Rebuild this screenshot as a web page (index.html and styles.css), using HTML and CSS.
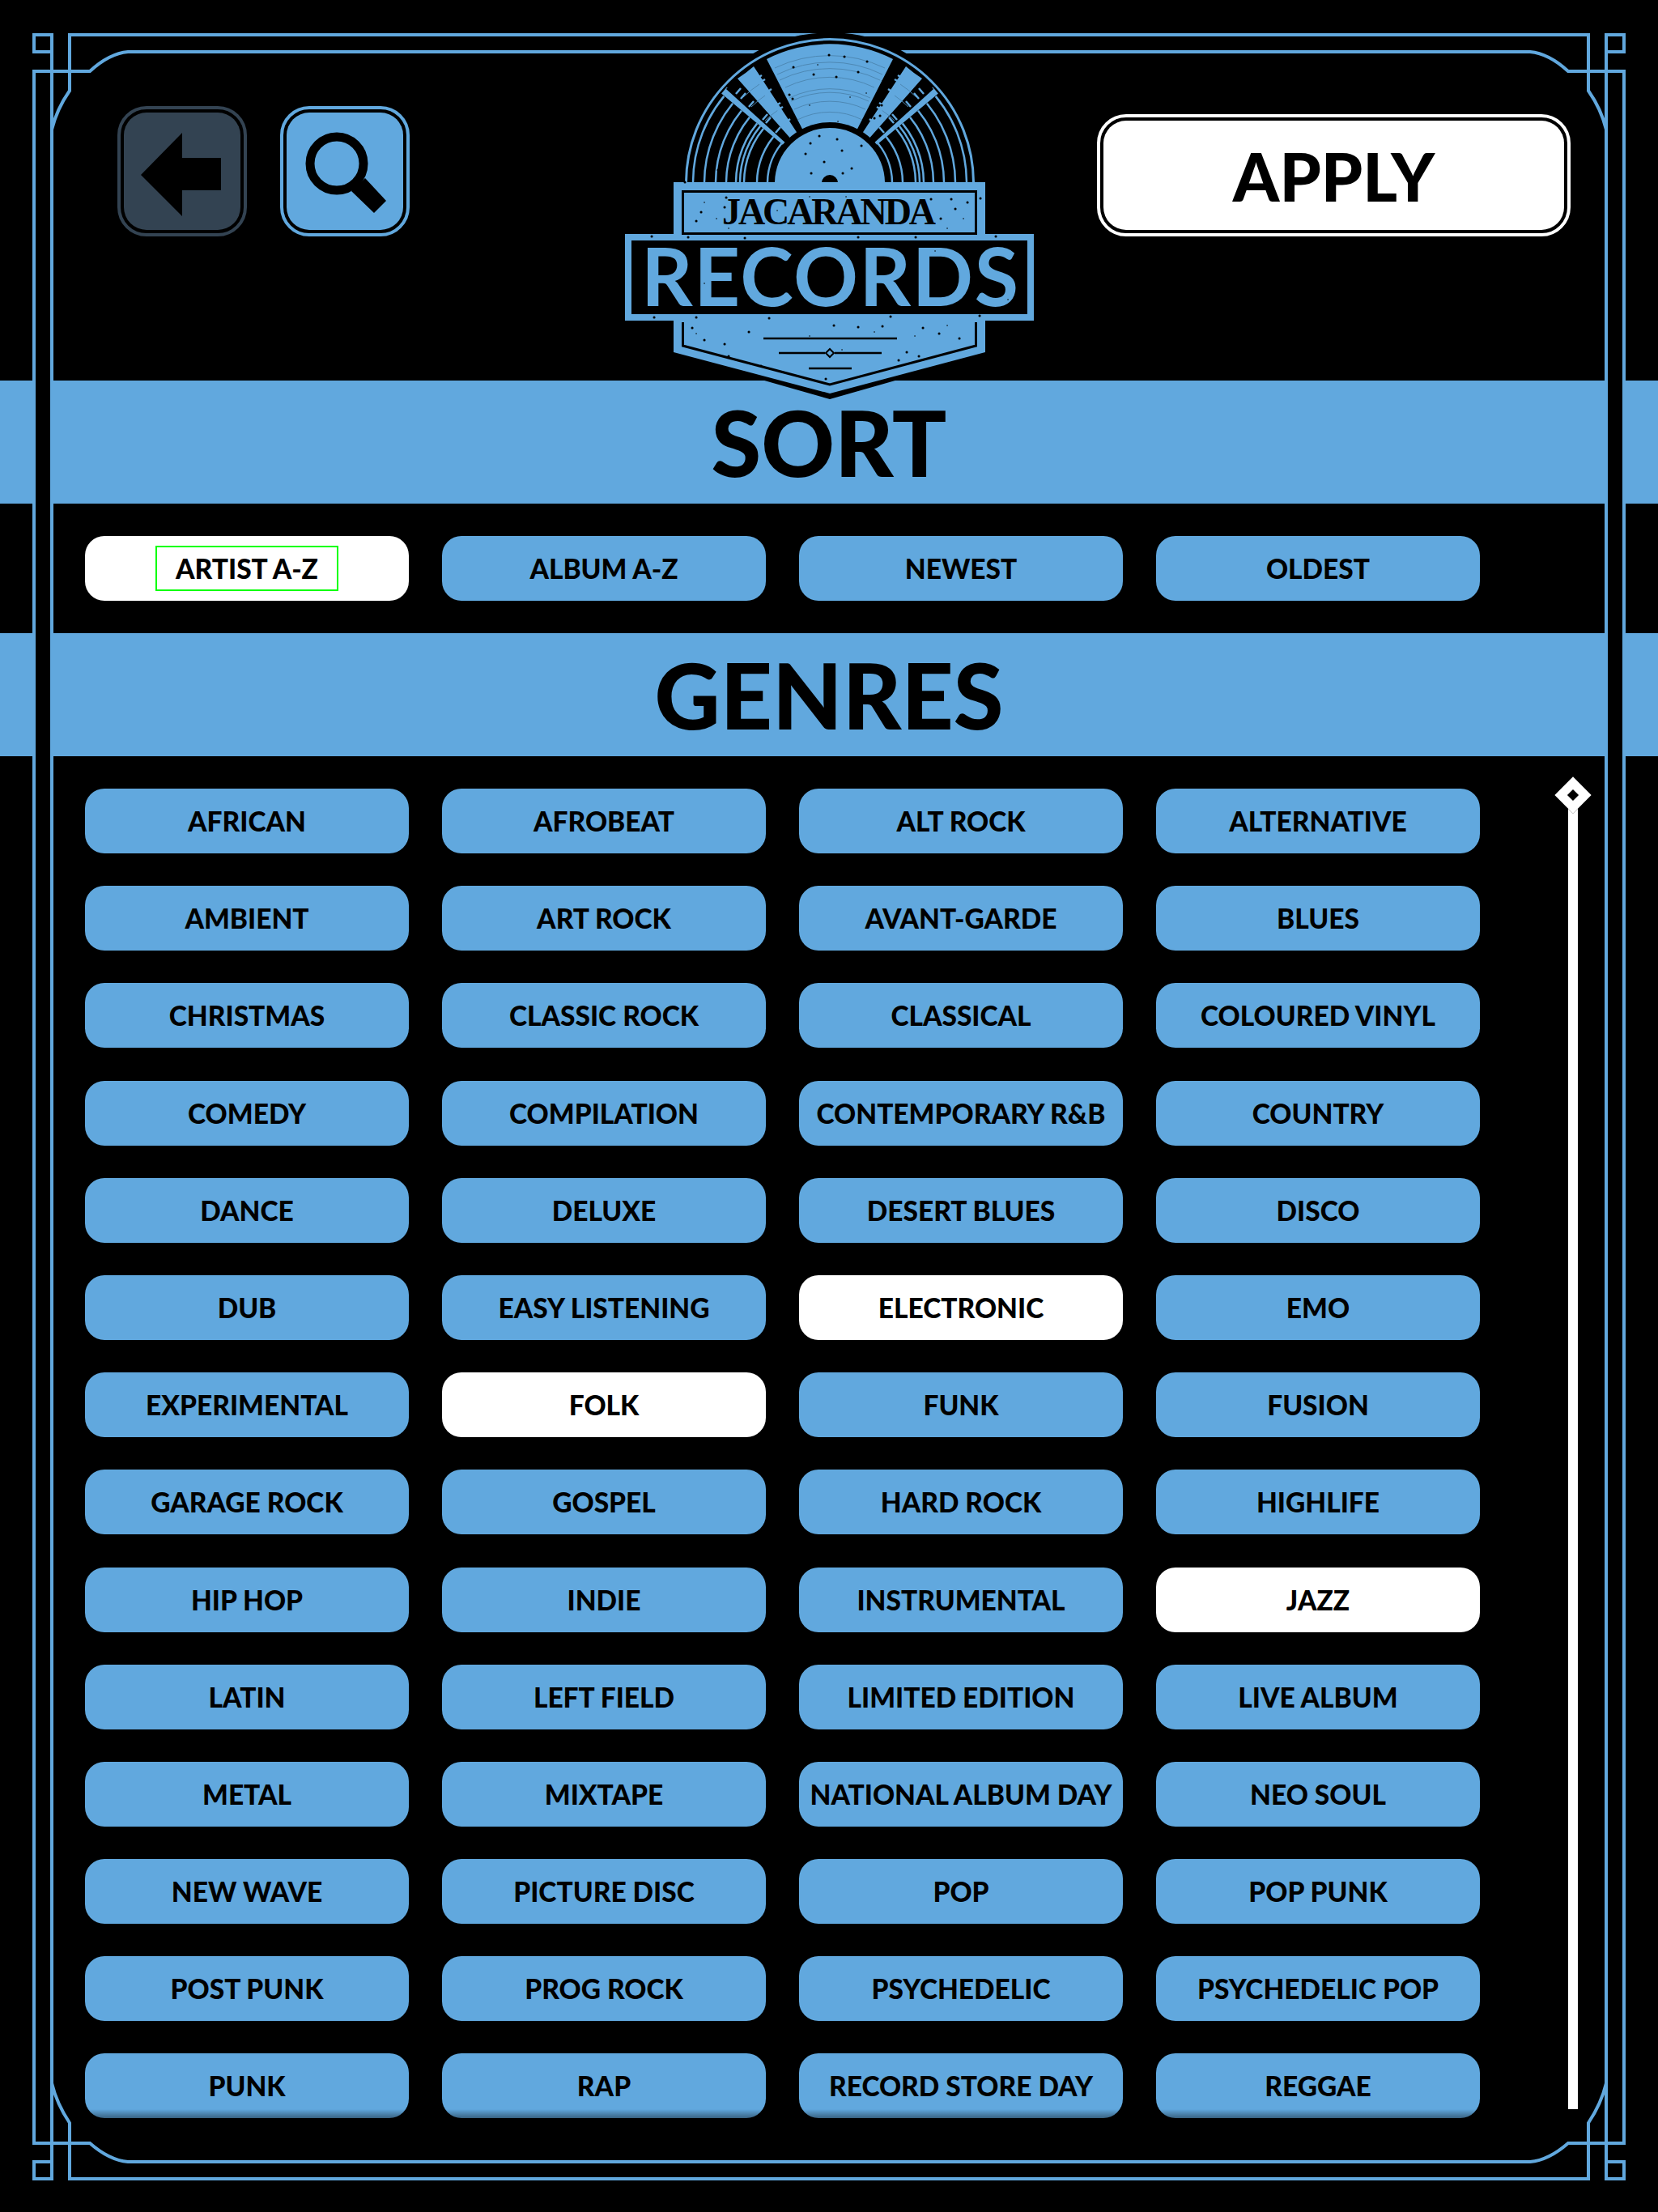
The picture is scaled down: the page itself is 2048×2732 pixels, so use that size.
FILE: index.html
```html
<!DOCTYPE html>
<html lang="en">
<head>
    <meta charset="UTF-8">
    <title>Jacaranda Records</title>
    <link rel="stylesheet" href="styles.css">
</head>
<body>
    <div class="page">
        <header class="topBar">
            <button class="iconButton backButton" aria-label="Back">
                <svg width="144" height="144" viewBox="153 139 144 144">
                    <path d="M174 216 225 164V195H273V235H225V267Z"></path>
                </svg>
            </button>
            <button class="iconButton searchButton" aria-label="Search">
                <svg width="144" height="144" viewBox="354 139 144 144">
                    <ellipse cx="416" cy="202" rx="33" ry="33" fill="none" stroke="#000" stroke-width="11"></ellipse>
                    <path d="M451 220 477 248 462 263 434 236Z"></path>
                </svg>
            </button>
            <button class="applyButton">APPLY</button>
        </header>

        <h2 class="sectionBar">SORT</h2>
        <div class="buttonGrid sortGrid">
            <button class="pill selected"><span class="focusBox">ARTIST A-Z</span></button>
            <button class="pill">ALBUM A-Z</button>
            <button class="pill">NEWEST</button>
            <button class="pill">OLDEST</button>
        </div>

        <h2 class="sectionBar">GENRES</h2>
        <div class="listArea">
            <div class="buttonGrid genreGrid">
                <button class="pill">AFRICAN</button>
                <button class="pill">AFROBEAT</button>
                <button class="pill">ALT ROCK</button>
                <button class="pill">ALTERNATIVE</button>
                <button class="pill">AMBIENT</button>
                <button class="pill">ART ROCK</button>
                <button class="pill">AVANT-GARDE</button>
                <button class="pill">BLUES</button>
                <button class="pill">CHRISTMAS</button>
                <button class="pill">CLASSIC ROCK</button>
                <button class="pill">CLASSICAL</button>
                <button class="pill">COLOURED VINYL</button>
                <button class="pill">COMEDY</button>
                <button class="pill">COMPILATION</button>
                <button class="pill">CONTEMPORARY R&amp;B</button>
                <button class="pill">COUNTRY</button>
                <button class="pill">DANCE</button>
                <button class="pill">DELUXE</button>
                <button class="pill">DESERT BLUES</button>
                <button class="pill">DISCO</button>
                <button class="pill">DUB</button>
                <button class="pill">EASY LISTENING</button>
                <button class="pill selected">ELECTRONIC</button>
                <button class="pill">EMO</button>
                <button class="pill">EXPERIMENTAL</button>
                <button class="pill selected">FOLK</button>
                <button class="pill">FUNK</button>
                <button class="pill">FUSION</button>
                <button class="pill">GARAGE ROCK</button>
                <button class="pill">GOSPEL</button>
                <button class="pill">HARD ROCK</button>
                <button class="pill">HIGHLIFE</button>
                <button class="pill">HIP HOP</button>
                <button class="pill">INDIE</button>
                <button class="pill">INSTRUMENTAL</button>
                <button class="pill selected">JAZZ</button>
                <button class="pill">LATIN</button>
                <button class="pill">LEFT FIELD</button>
                <button class="pill">LIMITED EDITION</button>
                <button class="pill">LIVE ALBUM</button>
                <button class="pill">METAL</button>
                <button class="pill">MIXTAPE</button>
                <button class="pill">NATIONAL ALBUM DAY</button>
                <button class="pill">NEO SOUL</button>
                <button class="pill">NEW WAVE</button>
                <button class="pill">PICTURE DISC</button>
                <button class="pill">POP</button>
                <button class="pill">POP PUNK</button>
                <button class="pill">POST PUNK</button>
                <button class="pill">PROG ROCK</button>
                <button class="pill">PSYCHEDELIC</button>
                <button class="pill">PSYCHEDELIC POP</button>
                <button class="pill">PUNK</button>
                <button class="pill">RAP</button>
                <button class="pill">RECORD STORE DAY</button>
                <button class="pill">REGGAE</button>
            </div>
            <div class="listFade"></div>
            <div class="scrollTrack"><div class="scrollThumb"></div></div>
        </div>

        <!-- art deco frame, drawn over the bars -->
        <svg class="frame" width="2048" height="2732" viewBox="0 0 2048 2732">
            <rect x="44" y="86" width="18" height="2561" fill="#000"></rect>
            <rect x="1986" y="86" width="18" height="2561" fill="#000"></rect>
            <g fill="none" stroke="#61a8de" stroke-width="4">
                <path d="M42 2647V88H111Q135 66 158 64H1890Q1913 66 1937 88H2006V2647H1937Q1913 2668 1890 2670H158Q135 2668 111 2647Z"></path>
                <path d="M64 64H42V43H64V2691H42V2670H64"></path>
                <path d="M64 160Q70 135 86 112V43H1962V112Q1978 135 1984 160"></path>
                <path d="M64 2573Q70 2598 86 2622V2691H1962V2622Q1978 2598 1984 2573"></path>
                <path d="M1984 64H2006V43H1984V2691H2006V2670H1984"></path>
            </g>
        </svg>

        <svg class="logo" width="560" height="480" viewBox="740 20 560 480">
            <defs>
                <clipPath id="discClip"><rect x="800" y="20" width="450" height="205"></rect></clipPath>
            </defs>
            <path d="M839 226a186 186 0 0 1 372 0V440L1025 493 839 440Z" fill="#000"></path>
            <g clip-path="url(#discClip)">
                <g fill="none" stroke="#61a8de" stroke-width="2.5">
                    <circle cx="1025" cy="226" r="177.5" stroke-width="3"></circle>
                    <circle cx="1025" cy="226" r="169"></circle>
                    <circle cx="1025" cy="226" r="155"></circle>
                    <circle cx="1025" cy="226" r="141"></circle>
                    <circle cx="1025" cy="226" r="128"></circle>
                    <circle cx="1025" cy="226" r="116"></circle>
                    <circle cx="1025" cy="226" r="111"></circle>
                    <circle cx="1025" cy="226" r="106"></circle>
                    <circle cx="1025" cy="226" r="90"></circle>
                    <circle cx="1025" cy="226" r="77"></circle>
                </g>
                <!-- wedges: black first, then the blue parts -->
                <path d="M1025 226 892 117A172 172 0 0 1 1158 117Z" fill="#000"></path>
                <path d="M1025 226 892.500 115.500 898 109 1025 226 1152 109 1157.500 115.500Z" fill="#61a8de" stroke="#61a8de" stroke-width="2"></path>
                <path d="M1025 226 947 73A172 172 0 0 1 1103 73Z" fill="#61a8de"></path>
                <path d="M1025 226 931 82A172 172 0 0 1 911 97Z" fill="#61a8de" transform="translate(0 0)"></path>
                <path d="M1025 226 1119 82A172 172 0 0 0 1139 97Z" fill="#61a8de"></path>
                <path d="M1025 226 897 110A172 172 0 0 1 908 99L1025 226Z" fill="#000"></path>
                <path d="M1025 226 1153 110A172 172 0 0 0 1142 99L1025 226Z" fill="#000"></path>
                <g fill="none" stroke="#4d88b4" stroke-width="1">
                    <path d="M957 84A158 158 0 0 1 1093 84"></path>
                    <path d="M960 92A147 147 0 0 1 1090 92"></path>
                    <path d="M963 99A141 141 0 0 1 1087 99"></path>
                    <path d="M970 108A126 126 0 0 1 1080 108"></path>
                    <path d="M975 121A116 116 0 0 1 1075 121"></path>
                    <path d="M977 125A112 112 0 0 1 1073 125"></path>
                    <path d="M981 135A103 103 0 0 1 1069 135"></path>
                    <path d="M985 148A88 88 0 0 1 1065 148"></path>
                    <path d="M918 120A150 150 0 0 1 938 104"></path>
                    <path d="M928 132A135 135 0 0 1 945 118"></path>
                    <path d="M945 149A110 110 0 0 1 961 136"></path>
                    <path d="M1132 120A150 150 0 0 0 1112 104"></path>
                    <path d="M1122 132A135 135 0 0 0 1105 118"></path>
                    <path d="M1105 149A110 110 0 0 0 1089 136"></path>
                </g>
                <g fill="none" stroke="#61a8de" stroke-width="2.5">
                    <path d="M941 93 934 97"></path>
                    <path d="M945 98 938 102"></path>
                    <path d="M953 110 947 114"></path>
                    <path d="M964 127 957 131"></path>
                    <path d="M967 132 960 136"></path>
                    <path d="M976 147 971 151"></path>
                    <path d="M1109 93 1116 97"></path>
                    <path d="M1105 98 1112 102"></path>
                    <path d="M1097 110 1103 114"></path>
                    <path d="M1086 127 1093 131"></path>
                    <path d="M1083 132 1090 136"></path>
                    <path d="M1074 147 1079 151"></path>
                    <path d="M909 116 915 109"></path>
                    <path d="M915 122 921 115"></path>
                    <path d="M925 132 931 125"></path>
                    <path d="M942 148 948 141"></path>
                    <path d="M946 152 952 145"></path>
                    <path d="M958 164 964 157"></path>
                    <path d="M1141 116 1135 109"></path>
                    <path d="M1135 122 1129 115"></path>
                    <path d="M1125 132 1119 125"></path>
                    <path d="M1108 148 1102 141"></path>
                    <path d="M1104 152 1098 145"></path>
                    <path d="M1092 164 1086 157"></path>
                </g>
                <circle cx="1025" cy="226" r="75" fill="#000"></circle>
                <circle cx="1025" cy="226" r="68" fill="#61a8de"></circle>
                <circle cx="1025" cy="226" r="10" fill="#000"></circle>
            </g>
            <!-- label blocks -->
            <path d="M832 225H1217V289H1277V396H1217V435L1025 486 832 435V396H772V289H832Z" fill="#61a8de"></path>
            <rect x="843.500" y="236.500" width="362" height="52" fill="none" stroke="#000" stroke-width="3"></rect>
            <rect x="780" y="297" width="489" height="91" fill="#000"></rect>
            <path d="M843.500 398V427L1025 475 1205.500 427V398" fill="none" stroke="#000" stroke-width="3"></path>
            <text class="logoSmall" x="892" y="277" textLength="264" lengthAdjust="spacing">JACARANDA</text>
            <text class="logoBig" x="792" y="378" textLength="466" lengthAdjust="spacing">RECORDS</text>
            <g stroke="#000" stroke-width="2.500" fill="none">
                <path d="M943 418H1108"></path>
                <path d="M962 436H1019M1031 436H1089"></path>
                <path d="M999 455H1052"></path>
                <path d="M1025 431 1030 436 1025 441 1020 436Z" stroke-width="2"></path>
            </g>
            <!-- worn print specks -->
            <path class="specks" d="M1024 68h.1M1005 92h.1M1071 76h.1M1043 70h.1M980 83h.1M1060 89h.1M975 117h.1M979 122h.1M1033 95h.1M1087 143h.1M1089 130h.1M1080 146h.1M1050 158h.1M1012 168h.1M1034 172h.1M1001 177h.1M1040 186h.1M1018 200h.1M1002 214h.1M1041 214h.1M995 190h.1M1064 180h.1M1052 208h.1M862 142h.1M852 160h.1M887 210h.1M846 225h.1M897 244h.1M895 256h.1M866 262h.1M860 273h.1M1175 246h.1M1180 258h.1M1162 270h.1M1150 246h.1M1195 250h.1M1211 245h.1M805 292h.1M850 293h.1M920 294h.1M1060 293h.1M1131 293h.1M1230 292h.1M808 392h.1M860 392h.1M950 393h.1M1100 391h.1M1210 390h.1M855 405h.1M870 420h.1M895 425h.1M925 410h.1M1030 402h.1M1060 404h.1M1090 403h.1M1140 405h.1M1160 412h.1M1185 418h.1M1120 435h.1M1110 445h.1M1135 440h.1M900 440h.1M940 452h.1M1020 468h.1"></path>
            <path class="specks specksSmall" d="M1035 150h.1M1010 80h.1M1090 100h.1M1000 130h.1M1050 120h.1M1070 115h.1M960 260h.1M870 250h.1M885 270h.1M1190 270h.1M1170 282h.1M900 282h.1M1000 243h.1M1045 243h.1M830 305h.1M870 304h.1M1000 302h.1M1120 320h.1M1150 340h.1M1155 310h.1M870 350h.1M1003 345h.1M1040 330h.1M1245 370h.1M1000 415h.1M1080 410h.1M1130 415h.1M860 412h.1M1170 402h.1M1040 432h.1M1075 462h.1"></path>
        </svg>
    </div>
</body>
</html>
```

FILE: styles.css
```css
* {
    box-sizing: border-box;
}
body {
    margin: 0;
    background-color: #000;
    font-family: "Lato", "Liberation Sans", sans-serif;
}
button {
    font-family: inherit;
    color: #000;
    cursor: pointer;
}
.page {
    position: relative;
    width: 2048px;
    height: 2732px;
    overflow: hidden;
}
.topBar {
    display: flex;
    align-items: flex-start;
    height: 470px;
    padding: 131px 108px 0 145px;
}
.iconButton {
    display: flex;
    width: 160px;
    height: 161px;
    padding: 4px;
    border-radius: 36px;
    border: 4px solid #61a8de;
    background-color: #61a8de;
    background-clip: content-box;
    overflow: hidden;
}
.iconButton svg {
    display: block;
    border-radius: 28px;
}
.backButton {
    border-color: #334352;
    background-color: #334352;
    margin-right: 41px;
}
.applyButton {
    margin: 10px 0 0 auto;
    width: 585px;
    height: 151px;
    padding: 4px;
    border: 4px solid #fff;
    border-radius: 36px;
    background-color: #fff;
    background-clip: content-box;
    font-size: 82px;
    font-weight: 900;
}
.sectionBar {
    margin: 0;
    height: 152px;
    background-color: #61a8de;
    color: #000;
    font-size: 112px;
    font-weight: 900;
    line-height: 152px;
    text-align: center;
}
.buttonGrid {
    display: grid;
    grid-template-columns: repeat(4, 400px);
    grid-auto-rows: 80px;
    column-gap: 41px;
    row-gap: 40.2px;
    padding-left: 105px;
}
.sortGrid {
    padding-top: 40px;
    height: 160px;
}
.listArea {
    position: relative;
    padding-top: 40px;
}
.pill {
    padding: 0;
    border: 0;
    border-radius: 24px;
    background-color: #61a8de;
    font-size: 33.5px;
    font-weight: 900;
    white-space: nowrap;
}
.pill.selected {
    background-color: #fff;
}
.focusBox {
    display: inline-block;
    width: 226px;
    height: 56px;
    border: 2px solid #0f0;
    line-height: 52px;
}
.listFade {
    position: absolute;
    left: 0;
    top: 1671px;
    width: 1860px;
    height: 12px;
    background: linear-gradient(rgba(0, 0, 0, 0), rgba(0, 0, 0, 0.45));
}
.scrollTrack {
    position: absolute;
    left: 1937px;
    top: 62px;
    width: 12px;
    height: 1609px;
    background-color: #fff;
}
.scrollThumb {
    position: absolute;
    left: -10px;
    top: -30px;
    width: 32px;
    height: 32px;
    border: 11px solid #fff;
    background-color: #000;
    transform: rotate(45deg);
}
.frame, .logo {
    position: absolute;
    pointer-events: none;
}
.frame {
    left: 0;
    top: 0;
}
.logo {
    left: 740px;
    top: 20px;
}
.logoSmall {
    font-family: "Liberation Serif", serif;
    font-size: 46px;
    font-weight: 700;
    fill: #000;
}
.logoBig {
    font-family: "Lato", sans-serif;
    font-size: 99px;
    font-weight: 700;
    fill: #61a8de;
}
.specks {
    fill: none;
    stroke: #000;
    stroke-width: 3;
    stroke-linecap: round;
}
.specksSmall {
    stroke-width: 1.5;
}
```
